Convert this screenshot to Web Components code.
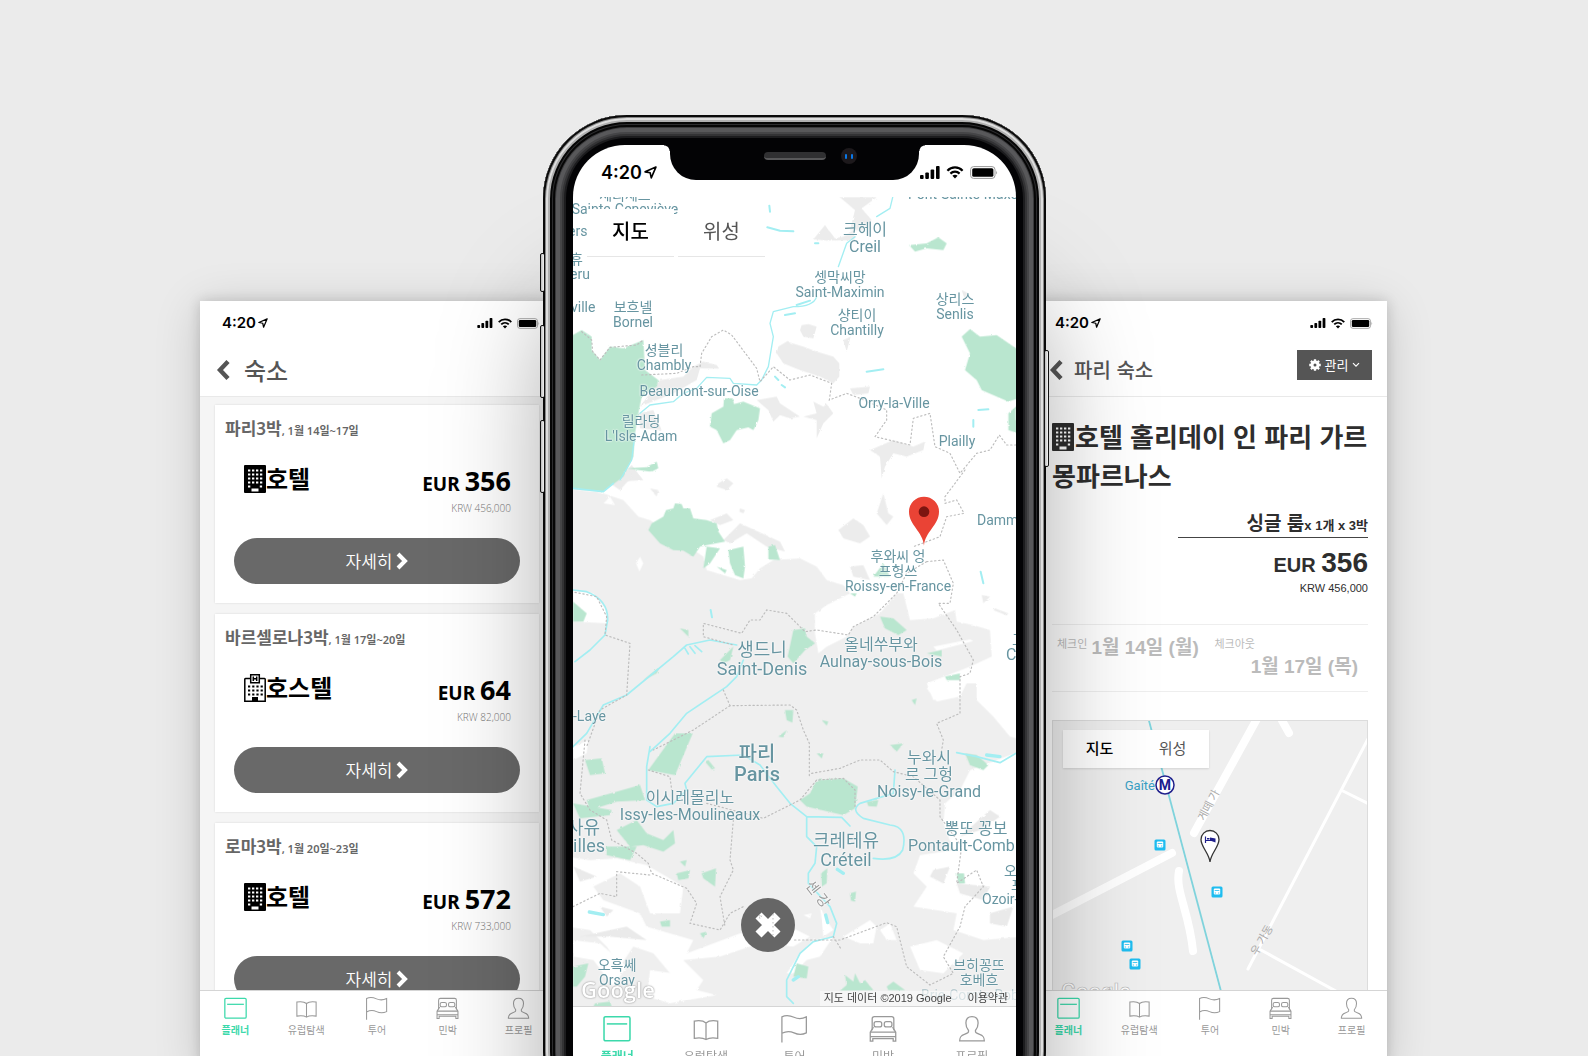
<!DOCTYPE html>
<html lang="ko">
<head>
<meta charset="utf-8">
<meta name="viewport" content="width=device-width, initial-scale=1">
<title>숙소 플래너</title>
<style>
  html, body { height: 100%; }
  body { margin: 0; overflow: hidden; background: #ebebeb; font-family: "Noto Sans", "Noto Sans CJK KR", sans-serif; }
</style>
</head>
<body>
<show-case>
  <app-screen slot="left">
    <status-bar></status-bar>
    <nav-header heading="숙소" size="big"></nav-header>
    <stay-list>
      <stay-card place="파리3박" dates=", 1월 14일~17일" kind="호텔" icon="hotel" price="356" krw="456,000"></stay-card>
      <stay-card place="바르셀로나3박" dates=", 1월 17일~20일" kind="호스텔" icon="hostel" price="64" krw="82,000"></stay-card>
      <stay-card place="로마3박" dates=", 1월 20일~23일" kind="호텔" icon="hotel" price="572" krw="733,000"></stay-card>
    </stay-list>
    <tab-bar slot="tabs"></tab-bar>
  </app-screen>
  <phone-frame slot="center">
    <app-screen large>
      <status-bar large></status-bar>
      <city-map></city-map>
      <tab-bar slot="tabs" large></tab-bar>
    </app-screen>
  </phone-frame>
  <app-screen slot="right">
    <status-bar></status-bar>
    <nav-header heading="파리 숙소" manage></nav-header>
    <stay-detail></stay-detail>
    <tab-bar slot="tabs"></tab-bar>
  </app-screen>
</show-case>

<script>
const ICONS = {
  planner: ['0 0 22 22', '<g fill="none" stroke="currentColor" stroke-width="1.2"><rect x=".8" y="1.3" width="20.4" height="19" rx="1.2"/><path d="M3 7h16"/></g>'],
  book: ['0 0 22 22', '<path d="M11 6.200C9 4.500 5 4.300 1.800 4.800V18.300C5 17.800 9 18 11 19.300C13 18 17 17.800 20.200 18.300V4.800C17 4.300 13 4.500 11 6.200V19" fill="none" stroke="currentColor" stroke-width="1"/>'],
  flag: ['0 0 22 22', '<path d="M1.500 21.700V1.500C5-.2 8 .5 11 1.800S17 3.300 20.700 1.500V14C17 15.800 14 15.400 11 14S5 12.500 1.500 14.300" fill="none" stroke="currentColor" stroke-width="1"/>'],
  bed: ['0 0 22 22', '<g fill="none" stroke="currentColor" stroke-width="1"><path d="M2.500 12V3Q2.500 1.300 4.200 1.300H17.800Q19.500 1.300 19.500 3V12"/><rect x="4" y="5.200" width="6" height="4.200" rx="1.600"/><rect x="12" y="5.200" width="6" height="4.200" rx="1.600"/><path d="M3.500 9.500L1 13.500V20.500H3V18.500H19V20.500H21V13.500L18.500 9.500M1 13.500H21M1 17H21"/></g>'],
  person: ['0 0 22 22', '<path d="M8.300 12.200C6.800 10.500 6.200 8.500 6.200 6.200C6.200 3 8 1.200 11 1.200S15.800 3 15.800 6.200C15.800 8.500 15.200 10.500 13.700 12.200C13.500 14 14.300 14.300 17 15.200C19.800 16.100 20.700 17.200 20.700 20.400H1.300C1.300 17.200 2.200 16.100 5 15.200C7.700 14.300 8.500 14 8.300 12.200Z" fill="none" stroke="currentColor" stroke-width="1"/>'],
  hotel: ['0 0 22 28', '<path fill="currentColor" fill-rule="evenodd" d="M1 0H21Q22 0 22 1V27Q22 28 21 28H1Q0 28 0 27V1Q0 0 1 0ZM7.500 23.500V26.500H14.500V23.500Z"/><path d="M4 5.500H19M4 9.500H19M4 13.500H19M4 17.500H19M4 21.500H7M15.800 21.500H19" stroke="#fff" stroke-width="2.200" stroke-dasharray="2.300 1.700"/>'],
  hostel: ['0 0 22 28', '<path fill="none" stroke="currentColor" stroke-width="1.500" d="M6.500 4.500H1.500Q.8 4.500 .8 5.300V27.200H21.200V5.300Q21.200 4.500 20.500 4.500H15.500M6.700 .8H15.300V8.700H6.700Z"/><path d="M9.300 2.600V7M12.700 2.600V7M9.300 4.800H12.700" stroke="currentColor" stroke-width="1.500"/><path d="M4 12.500H19M4 16.500H19M4 20.500H19" stroke="currentColor" stroke-width="2" stroke-dasharray="2.200 2"/><path d="M8 23H14V28H8Z" fill="currentColor"/>'],
  left: ['0 0 14 22', '<path d="M12 2.500L4 11L12 19.500" fill="none" stroke="currentColor" stroke-width="4.400"/>'],
  right: ['0 0 12 18', '<path d="M2 2L9 9L2 16" fill="none" stroke="currentColor" stroke-width="4"/>'],
  down: ['0 0 8 6', '<path d="M1 1.200L4 4.200L7 1.200" fill="none" stroke="currentColor" stroke-width="1.200"/>'],
  gear: ['-12 -12 24 24', '<circle r="6" fill="none" stroke="currentColor" stroke-width="6"/><path d="M0-11.500V-7M0 11.500V7M-11.500 0H-7M11.500 0H7M-8.200-8.200L-5-5M8.200 8.200L5 5M8.200-8.200L5-5M-8.200 8.200L-5 5" stroke="currentColor" stroke-width="4.600"/>'],
  arrow: ['0 0 12 12', '<path d="M11 1L1 5.400L5.700 6.300L6.700 11Z" fill="none" stroke="currentColor" stroke-width="1.500" stroke-linejoin="round"/>'],
  signal: ['0 0 20 13', '<g fill="currentColor"><rect y="9" width="3.600" height="4" rx="1"/><rect x="5.300" y="6.500" width="3.600" height="6.500" rx="1"/><rect x="10.600" y="3.500" width="3.600" height="9.500" rx="1"/><rect x="16" width="3.600" height="13" rx="1"/></g>'],
  wifi: ['0 0 17 13', '<g fill="none" stroke="currentColor" stroke-width="2.200"><path d="M.9 4.700C5 .3 12 .3 16.100 4.700"/><path d="M3.900 7.600C6.500 5 10.500 5 13.100 7.600"/></g><path d="M8.500 12.500L5.900 9.800C7.400 8.500 9.600 8.500 11.100 9.800Z" fill="currentColor"/>'],
  battery: ['0 0 28 13', '<rect x=".6" y=".6" width="24.400" height="11.800" rx="3" fill="none" stroke="#999" stroke-width="1"/><rect x="2.200" y="2.200" width="21.200" height="8.600" rx="1.600" fill="currentColor"/><path d="M26.200 4.500Q27.800 6.500 26.200 8.500Z" fill="#999"/>'],
  close: ['0 0 28 28', '<path d="M4.500 4.500L23.500 23.500M23.500 4.500L4.500 23.500" stroke="currentColor" stroke-width="8.500"/><path d="M5 5L8 4L6 8ZM19 3V24" fill="none" stroke="#bbb" stroke-width="1" stroke-dasharray="1.500 2.500"/>']
};
const icon = (name, w, h) => `<svg class="i ${name}" width="${w}" height="${h}" viewBox="${ICONS[name][0]}" aria-hidden="true">${ICONS[name][1]}</svg>`;

class Base extends HTMLElement {
  connectedCallback() {
    if (this.shadowRoot) return;
    this.attachShadow({ mode: 'open' }).innerHTML =
      `<style>*{box-sizing:border-box}:host{display:block;box-sizing:border-box}svg{display:block;flex:none}button{font:inherit;border:0;padding:0;margin:0;background:none;color:inherit;cursor:pointer}h1,h2,p{margin:0}b{font-weight:700}${this.css()}</style>${this.html()}`;
  }
  attr(n) { return this.getAttribute(n) || ''; }
}

customElements.define('show-case', class extends Base {
  css() { return `
    :host{height:100vh;overflow:hidden}
    .row{display:flex;justify-content:center;align-items:flex-start;padding-right:1px}
    .side{flex:0 1 354px;margin-top:301px;box-shadow:0 0 12px rgba(0,0,0,.16),0 6px 44px rgba(0,0,0,.16)}
    .mid{flex:0 0 503px;margin:115px -13px 0 -11px;position:relative;z-index:1}`; }
  html() { return `<main class="row"><div class="side"><slot name="left"></slot></div><div class="mid"><slot name="center"></slot></div><div class="side"><slot name="right"></slot></div></main>`; }
});

customElements.define('app-screen', class extends Base {
  css() { return `
    :host{display:flex;flex-direction:column;aspect-ratio:375/812;background:#fff;overflow:hidden}
    .body{flex:1 1 0;min-height:0;overflow:hidden;display:flex;flex-direction:column}`; }
  html() { return `<div class="body"><slot></slot></div><slot name="tabs"></slot>`; }
});

customElements.define('status-bar', class extends Base {
  css() { return `
    :host{display:flex;align-items:center;justify-content:space-between;height:42px;flex:none;padding:2px 14px 0 22px;color:#000;font:600 15px/20px Inter,sans-serif}
    :host([large]){height:52px;padding:3px 18px 0 28px;font-size:18px}
    div{display:flex;align-items:center;gap:2px}
    .r{gap:5px}
    :host([large]) .r{gap:6px}`; }
  html() { const L = this.hasAttribute('large'); return `
    <div><span>4:20</span>${L ? icon('arrow',13,13) : icon('arrow',10,10)}</div>
    <div class="r">${L ? icon('signal',20,13)+icon('wifi',18,13)+icon('battery',28,13) : icon('signal',16,10)+icon('wifi',14,11)+icon('battery',23,11)}</div>`; }
});

customElements.define('nav-header', class extends Base {
  css() { return `
    :host{display:flex;align-items:center;flex:none;height:54px;padding:0 15px 0 16px;border-bottom:1px solid #e9e9e9;color:#555}
    h1{flex:1;margin-left:11px;font:500 20px/30px "Noto Sans CJK KR",sans-serif}
    :host([size=big]) h1{margin-left:14px;font-size:24px}
    .m{display:flex;align-items:center;justify-content:center;gap:4px;width:75px;height:30px;margin-top:-9px;background:#555;color:#fff;font:400 13px/20px "Noto Sans CJK KR",sans-serif}`; }
  html() { return `<button type="button" title="뒤로">${icon('left',14,22)}</button><h1>${this.attr('heading')}</h1>${this.hasAttribute('manage') ? `<button type="button" class="m">${icon('gear',12,12)}<span>관리</span>${icon('down',8,6)}</button>` : ''}`; }
});

customElements.define('stay-list', class extends Base {
  css() { return `:host{display:flex;flex-direction:column;gap:11px;padding:8px 15px 0;background:#f5f5f5;flex:1 0 auto}`; }
  html() { return `<slot></slot>`; }
});

customElements.define('stay-card', class extends Base {
  css() { return `
    :host{display:flex;flex-direction:column;height:198px;flex:none;background:#fff;box-shadow:0 0 2px rgba(0,0,0,.12);padding:10px 10px 19px}
    h2{font:600 17px/28px "Noto Sans","Noto Sans CJK KR",sans-serif;color:#666}
    h2 small{font-size:11px}
    .r{display:flex;justify-content:space-between;align-items:flex-start;padding:16px 18px 0 19px}
    .k{display:flex;align-items:center;font:700 24px/34px "Noto Sans CJK KR",sans-serif}
    .k svg{margin-top:2px}
    .p{text-align:right;color:#000;font:700 19px/34px "Noto Sans",sans-serif;margin-top:3px}
    .p b{font-size:27px}
    .p small{display:block;font:300 10px/14px "Open Sans",sans-serif;color:#777}
    button.go{display:flex;align-items:center;justify-content:center;gap:4px;height:46px;margin:auto 9px 0;border-radius:23px;background:#696969;color:#fff;font:350 17px/24px "Noto Sans CJK KR",sans-serif}`; }
  html() { return `
    <h2>${this.attr('place')}<small>${this.attr('dates')}</small></h2>
    <div class="r"><div class="k">${icon(this.attr('icon'),22,28)}<span>${this.attr('kind')}</span></div>
    <p class="p">EUR <b>${this.attr('price')}</b><small>KRW ${this.attr('krw')}</small></p></div>
    <button type="button" class="go"><span>자세히</span>${icon('right',12,18)}</button>`; }
});

customElements.define('tab-bar', class extends Base {
  css() { return `
    :host{flex:none;height:78px;background:#fff;border-top:1px solid #d5d5d5;position:relative}
    :host([large]){height:98px}
    nav{display:grid;grid-template-columns:repeat(5,1fr)}
    a{display:flex;flex-direction:column;align-items:center;gap:2px;padding-top:6px;color:#999;text-decoration:none;font:400 10px/15px "Noto Sans CJK KR",sans-serif}
    a.on{color:#3cd9ab;font-weight:700}
    :host([large]) a{padding-top:8px;gap:4px;font-size:12px;line-height:18px}`; }
  html() { const s = this.hasAttribute('large') ? 28 : 23;
    return `<nav>${[['planner','플래너'],['book','유럽탐색'],['flag','투어'],['bed','민박'],['person','프로필']].map(([i,t],n) => `<a href="#${i}"${n ? '' : ' class="on"'}>${icon(i,s,s)}<span>${t}</span></a>`).join('')}</nav>`; }
});

customElements.define('stay-detail', class extends Base {
  css() { return `
    :host{display:flex;flex-direction:column;padding:19px 19px 0;color:#2e2e2e;font-family:"Liberation Sans","Noto Sans CJK KR",sans-serif}
    h2{margin-right:-8px;font:700 26px/39px "Noto Sans CJK KR",sans-serif}
    h2 svg{display:inline-block;vertical-align:-4px;margin-right:1px}
    .room{align-self:flex-end;width:60%;margin-top:18px;border-bottom:1px solid #444;text-align:right;font-weight:700;font-size:13px;line-height:23px;white-space:nowrap}
    .room b{font-size:19px}
    .price{margin-top:9px;text-align:right;font-weight:700;font-size:20px;line-height:32px}
    .price b{font-size:28px}
    .krw{text-align:right;font-size:11px;line-height:15px}
    .dates{display:grid;grid-template-columns:1fr 1fr;margin-top:28px;padding:9px 10px 0 5px;height:68px;border:solid #eee;border-width:1px 0;color:#bbb}
    .dates div{display:flex;align-items:flex-start;gap:4px}
    .dates .out{flex-direction:column;gap:0;padding-left:7px}
    small{font-size:11px;line-height:20px}
    .dates b{font-size:19px;line-height:28px;white-space:nowrap}
    .out b{align-self:flex-end;line-height:20px;margin-top:3px}
    street-map{margin-top:28px}`; }
  html() { return `
    <h2>${icon('hotel',22,28)}호텔 홀리데이 인 파리 가르몽파르나스</h2>
    <p class="room"><b>싱글 룸</b>x 1개 x 3박</p>
    <p class="price">EUR <b>356</b></p><p class="krw">KRW 456,000</p>
    <div class="dates"><div><small>체크인</small><b>1월 14일 (월)</b></div><div class="out"><small>체크아웃</small><b>1월 17일 (목)</b></div></div>
    <street-map></street-map>`; }
});

const bus = (x, y) => `<g transform="translate(${x} ${y})"><rect x="-5.500" y="-5.500" width="11" height="11" rx="1.500" fill="#1fbdf0"/><rect x="-3.200" y="-3.600" width="6.400" height="6.200" rx="1" fill="#fff"/><path d="M-2.300-1.500H2.300M-2.300 1H-1M2.300 1H1M-2.500 3.300H-1.500M2.500 3.300H1.500" stroke="#1fbdf0" stroke-width=".8"/></g>`;

customElements.define('street-map', class extends Base {
  css() { return `
    :host{position:relative;height:316px;background:#efefef;border:1px solid #dcdcdc;overflow:hidden}
    .t{position:absolute;left:10px;top:9px;display:flex;background:#fff;box-shadow:0 1px 2px rgba(0,0,0,.12)}
    .t button{width:73px;height:38px;padding-bottom:2px;font:400 15px/24px "Noto Sans CJK KR",sans-serif;color:#555}
    .t button.on{font-weight:500;color:#000}
    text{font-family:Roboto,"Noto Sans CJK KR",sans-serif}`; }
  html() { return `<svg width="100%" height="316" viewBox="0 0 316 316" preserveAspectRatio="xMinYMin slice">
    <g fill="none" stroke="#fff" stroke-linecap="round"><path stroke-width="8" d="M205-4L141 112M226-6L236 12M-3 195L119 132M126 150C122 170 136 190 140 230"/><path stroke-width="3" d="M318 12L195 248M290 70L318 84M208 229L290 274"/></g>
    <path d="M95-4L169 274" stroke="#7fd3dc" stroke-width="1.800"/>
    <circle cx="112" cy="64" r="9" fill="#fff" stroke="#20208c" stroke-width="1.500"/><text x="112" y="69" text-anchor="middle" font-size="14" font-weight="700" fill="#20208c">M</text>
    <text x="102" y="69" text-anchor="end" font-size="13" fill="#3a9fc4">Gaîté</text>
    ${bus(107,124)}${bus(164,171)}${bus(74,225)}${bus(82,243)}
    <path d="M157 141C156 132 148 126 148 118.500A9 9 0 0 1 166 118.500C166 126 158 132 157 141Z" fill="#fff" stroke="#333" stroke-width="1.300"/><path d="M152.500 115.500V122M153 119.500H162" stroke="#20208c" stroke-width="1.200" fill="none"/><path d="M154 118.500V117H156.500V118.500ZM157 119.500V116.500L162.500 117.500V121.500Z" fill="#20208c"/>
    <g fill="#aaa" font-size="11" text-anchor="middle"><text transform="translate(159 86) rotate(-62)">게떼 가</text><text transform="translate(212 221) rotate(-60)">우 가동</text></g>
    <text x="8" y="278" font-size="22" font-weight="500" fill="#fff" stroke="#bbb" stroke-width=".7">Google</text>
    </svg><div class="t"><button type="button" class="on">지도</button><button type="button">위성</button></div>`; }
});

/* Labels: x, y in map pixels (centre unless anchored left), lines, size, options */
const LABELS = [
  [52,-2,'세리제스',14],[52,12,'Sainte-Geneviève',14],[-5,34,'ers',14,'l'],[-3,62,'휴',14,'l'],[-3,77,'eru',14,'l'],[-2,110,'ville',14,'l'],
  [60,118,'보흐넬|Bornel',14],[292,41,'크헤이|Creil',16],[267,88,'셍막씨망|Saint-Maximin',14],[382,110,'상리스|Senlis',14],[284,126,'샹티이|Chantilly',14],
  [91,161,'셩블리|Chambly',14],[126,194,'Beaumont-sur-Oise',14],[68,232,'릴라덩|L\'Isle-Adam',14],[321,206,'Orry-la-Ville',14],[384,244,'Plailly',14],[442,218,'E',14,'l'],
  [335,-3,'Pont-Sainte-Maxence',14,'l'],[404,323,'Damm',14,'l'],[325,374,'후와씨 엉|프헝쓰|Roissy-en-France',14],[189,462,'생드니|Saint-Denis',18],[308,456,'올네쑤부와|Aulnay-sous-Bois',16],
  [0,519,'-Laye',14,'l'],[433,457,'C',16,'l'],[439,443,'꼬',16,'l'],[184,567,'파리|Paris',20,'b'],[356,577,'누와시|르 그헝|Noisy-le-Grand',16],[117,609,'이시레몰리노|Issy-les-Moulineaux',16],
  [-6,630,'사유',17,'l'],[0,648,'illes',18,'l'],[273,653,'크레테유|Créteil',18],[403,631,'뽕또 꽁보',16],[335,648,'Pontault-Comb',16,'l'],[431,674,'오',14,'l'],[438,688,'프',14,'l'],[409,702,'Ozoir-',14,'l'],
  [44,776,'오흑쎄|Orsay',14],[406,776,'브히꽁뜨|호베흐',14],[348,798,'Brie-Comte-Rob',14,'lf']
];

customElements.define('city-map', class extends Base {
  css() { return `
    :host{position:relative;flex:1 1 0;min-height:0;background:#fff;overflow:hidden}
    .map{position:absolute;inset:0;width:100%;height:100%}
    .l{position:absolute;transform:translate(-50%,-50%);text-align:center;white-space:nowrap;color:#6795a1;font-family:Roboto,"Noto Sans CJK KR",sans-serif;text-shadow:0 0 2px #fff,0 0 2px #fff}
    .l.l1{transform:translateY(-50%)}
    .s14{font-size:14px;line-height:15px}.s16{font-size:16px;line-height:17px}.s17,.s18{font-size:18px;line-height:19px}.s20{font-size:20px;line-height:20px;font-weight:500}
    .f{opacity:.4}
    .l.river{left:245px;top:697px;font-size:14px;line-height:16px;color:#999;transform:translate(-50%,-50%) rotate(52deg)}
    .t{position:absolute;left:14px;top:12px;display:flex;gap:4px}
    .t button{width:87px;height:48px;padding-bottom:4px;background:#fff;border-bottom:1px solid #e6e6e6;font:400 20px/30px "Noto Sans CJK KR",sans-serif;color:#555}
    .t button.on{font-weight:500;color:#000}
    .x{position:absolute;left:168px;bottom:54px;width:54px;height:54px;border-radius:50%;background:#666;color:#fff;display:flex;align-items:center;justify-content:center}
    .g{position:absolute;left:8px;bottom:3px;font:600 22px/28px "Open Sans",sans-serif;color:#fff;text-shadow:0 0 2px #999,0 0 1px #999}
    .c{position:absolute;right:0;bottom:0;display:flex;gap:16px;padding:0 8px 0 4px;background:rgba(255,255,255,.45);color:#444;font:400 11px/15px "Liberation Sans","Noto Sans CJK KR",sans-serif;white-space:nowrap}`; }
  html() {
    return `<svg class="map" viewBox="39 51 1329 2429" preserveAspectRatio="xMinYMin slice">
    <defs><filter id="r" x="-5%" y="-5%" width="110%" height="110%"><feTurbulence type="fractalNoise" baseFrequency=".09" numOctaves="2" seed="4"/><feDisplacementMap in="SourceGraphic" scale="7"/></filter></defs>
    <g filter="url(#r)">
     <g fill="#ececec">
      <path d="M840 52H950L905 85L935 120L910 150L870 150L885 90ZM760 178L795 135L825 175L850 170L880 150L885 180L800 182Z"/>
      <path d="M650 520L655 500L680 485L730 500L770 515L820 530L838 550V590L820 610L780 590L720 570L670 550ZM720 450L725 435L745 432L770 440L760 475L730 470ZM590 660L650 650L660 670L720 710L690 715L660 705L640 725L625 690ZM760 665L790 680L800 672L820 700L790 730L770 775L770 720L730 710L770 700ZM870 625L930 620L925 640L880 645ZM850 480L872 470L860 515ZM1205 330L1225 340L1215 360Z"/>
      <path d="M400 560L430 545L470 555L478 566L420 565L410 600L340 640L240 680L270 640L300 600L370 590ZM235 700L280 690L305 750L240 745ZM930 810L1000 780L1060 800L1095 785L1090 810L1040 830L1000 820L975 860L965 895L960 830ZM190 880L215 855L250 900L180 905Z"/>
      <g transform="translate(0 870)"><path d="M150 40L200 0L220 15L180 60ZM475 40L500 25L520 40L500 60L470 50ZM540 115L555 120L550 130L538 125ZM835 180L880 145L910 165L930 200L900 220L850 205ZM950 130L970 70L985 130L1000 140L980 165ZM450 150L500 130L520 150L480 165ZM490 210L540 160L660 215L675 245L620 230L560 190L510 220ZM870 290L910 285L930 330L880 320ZM1265 375L1290 380L1270 400ZM1305 415L1345 430L1340 436L1300 420ZM270 55L295 60L290 80Z"/></g>
     </g>
     <g fill="#efefef">
      <path d="M20 925L130 940L190 960L235 1010L270 1020L430 1130L440 1170L540 1200L575 1195L600 1165L640 1140L720 1135L770 1160L800 1200L850 1215L870 1240L800 1275L765 1300L765 1360L775 1420L800 1400L860 1370L880 1340L960 1300L1010 1240L1030 1240L1050 1320L1120 1315L1185 1290L1190 1325L1240 1335L1290 1350L1295 1430L1230 1460L1100 1510L1120 1560L1200 1540L1210 1510L1250 1510L1250 1560L1300 1610L1350 1670L1390 1680L1390 2500H20Z"/>
     </g>
     <g fill="#fff">
      <path d="M130 970L150 950L165 975ZM228 1150L240 1130L250 1150L238 1175ZM39 1230L100 1240L140 1290L140 1330L39 1325Z"/>
      <path d="M1100 1525L1180 1490L1230 1490L1200 1550L1130 1565ZM1120 1400L1230 1378L1240 1383L1130 1412Z"/>
      <g transform="translate(0 1680)">
       <path d="M1230 90L1390 30V590L1270 600L1180 570L1190 520L1060 500L1100 440L1060 400L1080 345L1180 330L1150 250L1155 190L1200 150Z"/>
       <path d="M20 350L90 360L170 355L260 375L320 410L370 440L360 520L270 520L240 440L180 400L100 440L130 480L240 520L260 560L400 600L380 640L540 580L690 560L750 590L700 620L600 610L480 650L370 660L430 720L390 780L330 700L280 640L220 620L180 680L140 620L90 570L20 560Z"/>
       <path d="M270 690L340 700L370 740L470 765L330 790L260 770ZM720 640L760 600L820 590L780 650L740 660L700 700L680 700ZM780 500L800 540L820 570L790 590ZM850 590L930 540L950 560L940 610L900 610ZM730 525L755 520L750 535ZM960 570L990 550L1010 600L980 600ZM120 610L200 680L160 740L100 660L40 650V600ZM1050 620L1130 600L1210 640L1150 700L1080 690ZM40 20L85 0L80 40L40 60Z"/>
      </g>
     </g>
     <g fill="#eaeaea" transform="translate(0 1680)"><path d="M40 380L110 410L60 425ZM60 590L200 560L260 600L150 590ZM120 500L160 510L140 530ZM1120 390L1170 380L1150 430L1110 410ZM1190 430L1290 440L1270 480L1200 460ZM1200 290L1290 210L1320 230L1260 270ZM1290 520L1360 500L1340 560L1290 550Z"/></g>
     <g fill="#b9e6cf">
      <path d="M30 470L65 450L95 470V510L120 540L150 500L190 505L250 480L255 570L295 600L290 620L245 650L235 700L225 760L220 830L190 890L130 935L30 925Z"/>
      <path d="M455 700L490 680L492 655L518 655L522 672L550 665L600 685L595 720L580 750L565 742L530 750L510 780L490 790L470 750L450 740ZM1205 470L1230 447L1260 470L1310 465L1390 520V650L1345 665L1265 630L1250 600L1215 570L1230 520ZM1345 700L1390 660V765L1345 750ZM1047 195L1100 190L1135 172L1160 190L1150 210L1100 205L1065 215ZM262 860L290 845L295 865L275 875Z"/>
      <path d="M265 1050L275 1030L310 1010L318 990L340 985L345 970L365 972L370 985L390 985L400 1015L440 1020L470 1030L475 1055L495 1085L440 1095L420 1100L400 1130L370 1112L340 1110L300 1090ZM430 1165L440 1100L480 1105L450 1150ZM470 1160L500 1170L495 1180ZM505 1110L550 1100L555 1160L550 1195L525 1185L510 1150ZM625 1100L645 1095L660 1140L625 1138ZM200 865L290 860L270 875ZM960 1310L1000 1315L1040 1350L1015 1365L975 1345ZM39 1265L80 1300L70 1325H39ZM700 1350L735 1345L740 1370L765 1390L735 1410L700 1450L683 1430ZM360 1345L385 1350L385 1370ZM480 1440L520 1400L510 1440L490 1450ZM940 1190L970 1150L990 1190ZM870 1240L890 1240L885 1250ZM1100 1420L1145 1410V1430ZM1155 1490L1200 1480V1500H1160ZM1055 1560L1070 1555L1065 1575ZM675 1590L700 1590L697 1628L680 1620ZM785 1620L805 1625L800 1637ZM655 1670L680 1650L670 1672ZM250 1500L300 1460L290 1480Z"/>
      <g transform="translate(0 1680)"><path d="M265 90L345 -20H398L345 105ZM75 60L125 55L135 100L90 105ZM80 180L240 135L255 180L170 185L90 210ZM39 190L155 210L150 225L60 235ZM170 270L230 240L260 280L310 300L340 270L345 310L310 335L250 315L210 320ZM140 320L230 320L210 360L140 345ZM350 400L390 390L385 415L355 420ZM425 400L468 385L465 440L430 415ZM720 180L750 160L770 120L850 115L893 140L885 205L850 225L740 200ZM783 400L802 385L800 430L785 440ZM870 460L888 455L885 485L873 482ZM300 545L330 540L330 560L305 560ZM420 580L440 575L430 595ZM1190 400L1212 400L1215 430L1195 430ZM920 185L955 180L950 200L925 198ZM1215 40L1250 45L1285 75L1270 90L1230 75ZM770 40L790 40L785 55ZM990 15L1030 10L1010 35ZM435 65L445 60L465 85L455 88ZM39 680L85 670L75 710L50 740H39ZM105 790L150 785L155 800H100ZM710 670L745 680L740 715L700 710ZM840 752L860 735L855 705L880 725L885 700L900 730L915 720L940 750ZM980 740L1000 725L1035 750H985ZM360 365L380 360L375 380Z"/></g>
     </g>
    </g>
    <g fill="none" stroke="#a3eef2" stroke-width="5" stroke-linejoin="round" stroke-linecap="round">
     <path d="M998 52L990 85L950 110M885 170L860 190L835 260M770 350Q760 380 700 380L640 395L630 430L640 470L625 560L605 600L590 615L520 610L510 595L440 592L410 625L370 640L340 665L270 675L240 700M225 760L215 840L180 900" stroke-width="4"/>
     <path d="M628 77L630 95M622 142L660 152L700 154M765 190L775 190M710 375L750 362M675 405L705 400M920 575L970 568M645 590L655 600M665 615L675 622M1255 690L1285 688M1240 720V740M1262 1175L1270 1210M452 1290L456 1312" stroke-width="6"/>
     <path d="M39 925L130 935L160 910M39 1230L80 1235Q145 1260 143 1320L135 1365L90 1410L45 1445M530 1395L450 1380L380 1395L340 1430L200 1545L130 1575L80 1660L39 1700M550 1440L530 1490L500 1520L380 1600L330 1660L270 1715M375 1405L385 1422M390 1400L405 1420M405 1397L425 1415"/>
     <g transform="translate(0 1680)"><path d="M270 20L260 80V180L290 200L340 190L380 150L375 130L440 50L550 45L600 75L650 140L690 190L740 230V290L770 320L765 370L745 400V430L810 500L830 550L820 590L760 605L720 640L680 720V770L700 790M740 230L845 232L870 258M1190 38L1250 50L1320 68L1368 40M1005 90L1000 160L900 190Q870 210 910 235L990 255Q1045 260 1028 330Q1010 365 940 355"/><path d="M88 516L130 524M797 525L803 548M832 388L850 400M700 720L715 710M1280 45L1320 50" stroke-width="10"/></g>
    </g>
    <g fill="none" stroke="#bdbdbd" stroke-width="3.500" stroke-dasharray="4 8" stroke-linecap="round">
     <path d="M65 455L95 480L98 515L120 540L150 502L230 495L250 480M245 585L350 580L400 560L420 560L425 520L455 470L490 450L515 465L590 565L600 605L640 560L690 600L750 585L815 610L808 660L860 640L900 655L980 690V720L945 770L1050 795L1060 715L1110 700L1125 800L1170 820L1200 880L1250 820L1290 810L1318 765L1340 795H1368M1215 870L1155 950V970L1190 960L1212 1000L1160 1010L1140 1070L1060 1100M1100 1145L1150 1140L1180 1210L1170 1270L1135 1270L1190 1350L1240 1440L1230 1480L1200 1490V1600L1130 1630L1150 1680L1140 1740M1100 1145L1040 1180L1010 1240L940 1310L880 1340L865 1365L770 1350L735 1355L680 1300L620 1290L600 1320L570 1320L545 1360L430 1330V1370L520 1395M45 1237L110 1250L140 1310L135 1365L210 1390L200 1545L120 1590L80 1700M490 1530L510 1577L690 1575L710 1590L730 1650L748 1690V1790M510 1577L400 1650L280 1710"/>
     <g transform="translate(0 1680)"><path d="M75 0L60 160L90 210L140 240L155 300L230 340L265 370L275 400L380 445L410 490L390 550L480 570L510 520L550 500M265 90L330 110L335 150M755 100L840 85L900 60L960 60L1000 95L1060 110L1140 180V230L1205 320L1190 430L1250 390L1270 440L1215 500L1200 560L1150 650L1180 700L1110 735L1040 680L1010 560L980 548L840 600L700 600M440 190L610 235L720 180L770 120L850 115L885 150V205M520 240L510 360L520 390L480 470L495 560M39 500L120 460L170 470V395L270 405M820 590L845 630"/></g>
    </g>
    <path d="M1092 1097C1089 1055 1047 1035 1047 995A45 45 0 0 1 1137 995C1137 1035 1095 1055 1092 1097Z" fill="#ea4335"/><circle cx="1092" cy="995" r="16" fill="#7c1510"/>
    </svg>
    ${LABELS.map(([x,y,t,s,o='']) => `<span class="l s${s}${o.includes('l') ? ' l1' : ''}${o.includes('f') ? ' f' : ''}" style="left:${x}px;top:${y}px">${t.split('|').join('<br>')}</span>`).join('')}
    <span class="l river">센 강</span>
    <div class="t"><button type="button" class="on">지도</button><button type="button">위성</button></div>
    <button type="button" class="x" title="닫기">${icon('close',28,28)}</button>
    <span class="g">Google</span>
    <div class="c"><span>지도 데이터 ©2019 Google</span><span>이용약관</span></div>`; }
});

customElements.define('phone-frame', class extends Base {
  css() { return `
    :host{position:relative}
    .body{position:relative;padding:30px;border-radius:84px;background:#030305;
      box-shadow:inset 0 0 0 2px #0a0a0a,inset 0 0 0 3px #888,inset 0 0 0 5px #dedede,inset 0 0 0 7px #b0b0b0,inset 0 0 0 9px #060606,inset 0 0 0 10px #2c2c2e,inset 0 0 0 12px #060606,inset 0 0 0 13px #3a3a3c,inset 0 0 0 17px #58585a,inset 0 0 0 19px #454547,inset 0 0 0 21px #333335,inset 0 0 0 23px #1c1c1e,0 170px 110px -6px rgba(0,0,0,.36)}
    .scr{border-radius:52px;overflow:hidden}
    .notch{position:absolute;top:30px;left:127px;right:127px;height:35px;background:#030305;border-radius:0 0 26px 26px}
    .notch::before,.notch::after{content:"";position:absolute;top:0;width:6px;height:6px}
    .notch::before{left:-6px;background:radial-gradient(circle at 0 100%,transparent 5px,#030305 6px)}
    .notch::after{right:-6px;background:radial-gradient(circle at 100% 100%,transparent 5px,#030305 6px)}
    .spk{position:absolute;top:7px;left:94px;width:62px;height:8px;border-radius:4px;background:#303032;border-bottom:2px solid #58585a}
    .cam{position:absolute;top:3px;left:171px;width:16px;height:16px;border-radius:50%;background:#1d191c;display:flex;align-items:center;justify-content:center;gap:4px}
    .cam i{width:2px;height:5px;border-radius:2px;background:#0a78e8}
    .b{position:absolute;width:5px;border:1px solid #111;border-radius:2px;background:linear-gradient(90deg,#bbb,#f5f5f5);left:-3px}
    .b1{top:138px;height:39px}.b2{top:210px;height:73px}.b3{top:305px;height:73px}
    .b4{left:auto;right:-3px;top:235px;height:117px}`; }
  html() { return `<div class="body"><div class="scr"><slot></slot></div><div class="notch"><span class="spk"></span><span class="cam"><i></i><i></i></span></div></div>
    <i class="b b1"></i><i class="b b2"></i><i class="b b3"></i><i class="b b4"></i>`; }
});
</script>
</body>
</html>
